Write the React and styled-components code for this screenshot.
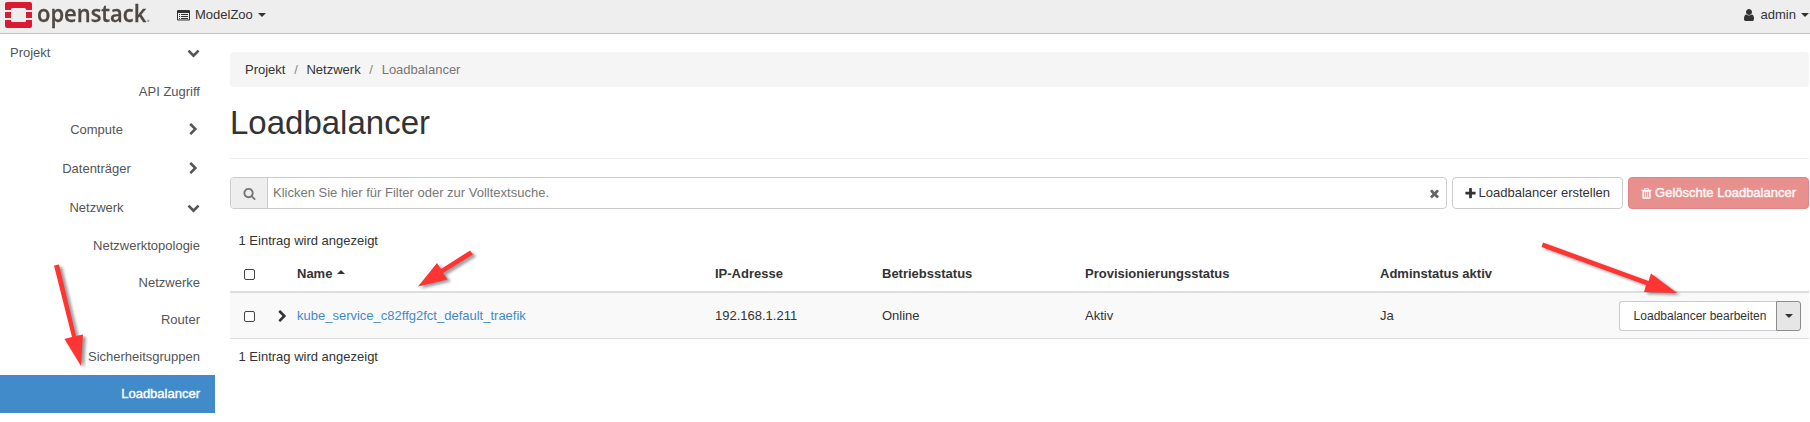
import React from "react";
import styled, { createGlobalStyle, css } from "styled-components";

const Global = createGlobalStyle`
  *, *::before, *::after { box-sizing: border-box; }
  body {
    margin: 0;
    background: #fff;
    color: #333;
    font: 13px/18.57px "Liberation Sans", Arial, sans-serif;
    overflow: hidden;
  }
  button { font: inherit; color: inherit; }
`;

const PATHS = {
  down: "M1683 808l-742 741q-19 19-45 19t-45-19l-742-741q-19-19-19-45.5t19-45.5l166-165q19-19 45-19t45 19l531 531 531-531q19-19 45-19t45 19l166 165q19 19 19 45.5t-19 45.5z",
  right: "M1363 877l-742 742q-19 19-45 19t-45-19l-166-166q-19-19-19-45t19-45l531-531-531-531q-19-19-19-45t19-45l166-166q19-19 45-19t45 19l742 742q19 19 19 45t-19 45z",
  search: "M1216 832q0-185-131.5-316.5t-316.5-131.5-316.5 131.5-131.5 316.5 131.5 316.5 316.5 131.5 316.5-131.5 131.5-316.5zm512 832q0 52-38 90t-90 38q-54 0-90-38l-343-342q-179 124-399 124-143 0-273.5-55.5t-225-150-150-225-55.5-273.5 55.5-273.5 150-225 225-150 273.5-55.5 273.5 55.5 225 150 150 225 55.5 273.5q0 220-124 399l343 343q37 37 37 90z",
  plus: "M1600 736v192q0 40-28 68t-68 28h-416v416q0 40-28 68t-68 28h-192q-40 0-68-28t-28-68v-416h-416q-40 0-68-28t-28-68v-192q0-40 28-68t68-28h416v-416q0-40 28-68t68-28h192q40 0 68 28t28 68v416h416q40 0 68 28t28 68z",
  times: "M1490 1322q0 40-28 68l-136 136q-28 28-68 28t-68-28l-294-294-294 294q-28 28-68 28t-68-28l-136-136q-28-28-28-68t28-68l294-294-294-294q-28-28-28-68t28-68l136-136q28-28 68-28t68 28l294 294 294-294q28-28 68-28t68 28l136 136q28 28 28 68t-28 68l-294 294 294 294q28 28 28 68z",
  trash: "M704 1376v-704q0-14-9-23t-23-9h-64q-14 0-23 9t-9 23v704q0 14 9 23t23 9h64q14 0 23-9t9-23zm256 0v-704q0-14-9-23t-23-9h-64q-14 0-23 9t-9 23v704q0 14 9 23t23 9h64q14 0 23-9t9-23zm256 0v-704q0-14-9-23t-23-9h-64q-14 0-23 9t-9 23v704q0 14 9 23t23 9h64q14 0 23-9t9-23zm-544-992h448l-48-117q-7-9-17-11h-317q-10 2-17 11zm928 32v64q0 14-9 23t-23 9h-96v948q0 83-47 143.5t-113 60.5h-832q-66 0-113-58.5t-47-141.5v-952h-96q-14 0-23-9t-9-23v-64q0-14 9-23t23-9h309l70-167q15-37 54-63t79-26h320q40 0 79 26t54 63l70 167h309q14 0 23 9t9 23z",
  user: "M1536 1399q0 109-62.5 187t-150.5 78h-854q-88 0-150.5-78t-62.5-187q0-85 8.5-160.5t31.5-152 58.5-131 94-89 134.5-34.5q131 128 313 128t313-128q76 0 134.5 34.5t94 89 58.5 131 31.5 152 8.5 160.5zm-256-887q0 159-112.5 271.5t-271.5 112.5-271.5-112.5-112.5-271.5 112.5-271.5 271.5-112.5 271.5 112.5 112.5 271.5z",
};

const Svg = styled.svg`
  display: block;
  flex: none;
  fill: currentColor;
`;

function Icon({ name, size = 13 }) {
  return (
    <Svg width={size} height={size} viewBox="0 0 1792 1792">
      <path d={PATHS[name]} />
    </Svg>
  );
}

const Caret = styled.span`
  flex: none;
  width: 0;
  height: 0;
  border: 4px solid transparent;
  ${(p) =>
    p.$up
      ? css`border-top: 0; border-bottom-color: currentColor; margin-bottom: 6px;`
      : css`border-bottom: 0; border-top-color: currentColor;`}
`;

const TopBar = styled.header`
  display: flex;
  align-items: center;
  height: 34px;
  padding: 0 1px 3px 5px;
  background: #eee;
  border-bottom: 1px solid #c4c4c4;
`;

const Brand = styled.div`
  display: flex;
  align-items: center;
  width: 172px;
  height: 30px;
`;

const BrandName = styled.span`
  align-self: flex-start;
  margin-left: 5px;
  color: #4f4741;
  font: 600 24px/26px "Open Sans", sans-serif;
  -webkit-text-stroke: 0.3px #4f4741;
  transform: scaleX(0.915);
  transform-origin: left;
  small { font-size: 16px; color: #999; -webkit-text-stroke: 0; }
`;

const TopMenu = styled.div`
  display: flex;
  align-items: center;
  gap: 5px;
  margin-left: ${(p) => (p.$end ? "auto" : "0")};
`;

const Body = styled.div`
  display: flex;
  height: 388px;
`;

const Sidebar = styled.nav`
  width: 215px;
  color: #555;
`;

const SideGroup = styled.div`
  display: flex;
  align-items: center;
  justify-content: ${(p) => (p.$level ? "flex-end" : "space-between")};
  height: ${(p) => (p.$level ? "39px" : "37px")};
  padding: 0 15px 0 10px;
`;

const GroupLabel = styled.span`
  padding-top: 1px;
  width: ${(p) => (p.$wide ? "auto" : "97px")};
  margin-right: ${(p) => (p.$wide ? "0" : "42px")};
  text-align: center;
`;

const SideItem = styled.div`
  height: 37px;
  padding-right: 15px;
  line-height: 37px;
  text-align: right;
  ${(p) =>
    p.$top &&
    css`
      height: 39px;
      line-height: 41px;
    `}
  ${(p) =>
    p.$active &&
    css`
      height: 38px;
      background: #428bca;
      color: #fff;
      -webkit-text-stroke: 0.4px #fff;
    `}
`;

const Main = styled.main`
  flex: 1;
  min-width: 0;
  padding: 18px 1px 0 15px;
`;

const Breadcrumb = styled.div`
  display: flex;
  height: 35px;
  padding: 0 15px;
  line-height: 35px;
  background: #f5f5f5;
  border-radius: 4px;
`;

const Crumb = styled.span`
  color: ${(p) => (p.$current ? "#777" : "#333")};
  &:not(:first-child)::before { content: "/"; padding: 0 8.7px; color: #888; }
`;

const Title = styled.h1`
  height: 72px;
  margin: 0 0 18px;
  padding-top: 18px;
  border-bottom: 1px solid #eee;
  font-size: 33px;
  font-weight: 400;
  line-height: 36px;
`;

const Toolbar = styled.div`
  display: flex;
  gap: 5px;
  height: 32px;
`;

const SearchBox = styled.div`
  display: flex;
  flex: 1;
  align-items: center;
  border: 1px solid #ccc;
  border-radius: 4px;
  color: #777;
`;

const SearchAddon = styled.div`
  display: flex;
  align-items: center;
  justify-content: center;
  width: 37px;
  height: 30px;
  margin-right: 5px;
  background: #eee;
  border-right: 1px solid #ccc;
  border-radius: 3px 0 0 3px;
`;

const Clear = styled.span`
  margin: 0 5px 0 auto;
  color: #666;
`;

const Button = styled.button`
  display: flex;
  align-items: center;
  gap: 2px;
  padding: 0 12px 0 11px;
  background: ${(p) => (p.$danger ? "#e7908e" : "#fff")};
  border: 1px solid ${(p) => (p.$danger ? "#e58583" : "#ccc")};
  border-radius: 4px;
  white-space: nowrap;
  ${(p) => p.$danger && css`color: #fdf3f3; -webkit-text-stroke: 0.5px #fdf3f3;`}
`;

const Count = styled.div`
  padding: ${(p) => (p.$bottom ? "9px" : "23px")} 8.5px 0;
`;

const columns = css`
  display: grid;
  grid-template-columns: 67px 418px 167px 203px 295px 164px 1fr;
  align-items: center;
`;

const HeadRow = styled.div`
  ${columns}
  height: 42px;
  padding-top: 8px;
  font-weight: bold;
  border-bottom: 2px solid #ddd;
`;

const Row = styled.div`
  ${columns}
  height: 46px;
  padding-top: 2px;
  background: #f9f9f9;
  border-bottom: 1px solid #ddd;
`;

const Lead = styled.div`
  display: flex;
  align-items: center;
  justify-content: space-between;
  padding: 0 8px 0 14px;
`;

const Check = styled.span`
  width: 11px;
  height: 11px;
  border: 1px solid #444;
  border-radius: 2px;
  background: #fff;
`;

const NameHead = styled.span`
  display: flex;
  align-items: center;
  gap: 5px;
`;

const Link = styled.a`
  color: #428bca;
`;

const Actions = styled.div`
  display: flex;
  justify-self: end;
  height: 30px;
  margin-right: 8px;
`;

const Action = styled.button`
  width: 157px;
  padding: 1px 0 0 4px;
  background: #fff;
  border: 1px solid #ccc;
  border-right: 0;
  border-radius: 3px 0 0 3px;
  font-size: 12px;
`;

const Toggle = styled.button`
  display: flex;
  align-items: center;
  justify-content: center;
  width: 25px;
  padding: 0;
  background: #e6e6e6;
  border: 1px solid #8c8c8c;
  border-radius: 0 3px 3px 0;
`;

const Pointers = styled.svg`
  position: absolute;
  inset: 0;
  width: 1810px;
  height: 422px;
  pointer-events: none;
  fill: #fe3533;
  filter: drop-shadow(3px 2px 1.5px rgba(0, 0, 0, 0.4));
`;

function Logo() {
  return (
    <Svg width="27" height="26" viewBox="0 0 27 26">
      <g fill="#da1a32">
        <path d="M2 0h23q2 0 2 2v6h-6V7.500q0-1.500-1.500-1.500h-12Q6 6 6 7.500V8H0V2q0-2 2-2z" />
        <path d="M0 10h6v6H0zM21 10h6v6h-6z" />
        <path d="M0 18h6v.5Q6 20 7.500 20h12q1.500 0 1.500-1.500V18h6v6q0 2-2 2H2q-2 0-2-2z" />
      </g>
    </Svg>
  );
}

function ListIcon() {
  return (
    <Svg width="13" height="11" viewBox="0 0 13 11">
      <path fillRule="evenodd" d="M1 0h11q1 0 1 1v8.500q0 1-1 1H1q-1 0-1-1V1q0-1 1-1zM1 3v6.500h11V3z" />
      <path d="M2 4h1v1H2zM4 4h7v1H4zM2 6h1v1H2zM4 6h7v1H4zM2 8h1v1H2zM4 8h7v1H4z" />
    </Svg>
  );
}

function Group({ label, open }) {
  return (
    <SideGroup $level={1}>
      <GroupLabel>{label}</GroupLabel>
      <Icon name={open ? "down" : "right"} />
    </SideGroup>
  );
}

export default function App() {
  return (
    <>
      <Global />
      <TopBar>
        <Brand>
          <Logo />
          <BrandName>openstack<small>.</small></BrandName>
        </Brand>
        <TopMenu>
          <ListIcon />
          ModelZoo
          <Caret />
        </TopMenu>
        <TopMenu $end>
          <Icon name="user" size={14} />
          admin
          <Caret />
        </TopMenu>
      </TopBar>
      <Body>
        <Sidebar>
          <SideGroup>
            <GroupLabel $wide>Projekt</GroupLabel>
            <Icon name="down" />
          </SideGroup>
          <SideItem $top>API Zugriff</SideItem>
          <Group label="Compute" />
          <Group label="Datenträger" />
          <Group label="Netzwerk" open />
          <SideItem>Netzwerktopologie</SideItem>
          <SideItem>Netzwerke</SideItem>
          <SideItem>Router</SideItem>
          <SideItem>Sicherheitsgruppen</SideItem>
          <SideItem $active>Loadbalancer</SideItem>
        </Sidebar>
        <Main>
          <Breadcrumb>
            <Crumb>Projekt</Crumb>
            <Crumb>Netzwerk</Crumb>
            <Crumb $current>Loadbalancer</Crumb>
          </Breadcrumb>
          <Title>Loadbalancer</Title>
          <Toolbar>
            <SearchBox>
              <SearchAddon><Icon name="search" /></SearchAddon>
              Klicken Sie hier für Filter oder zur Volltextsuche.
              <Clear><Icon name="times" /></Clear>
            </SearchBox>
            <Button><Icon name="plus" />Loadbalancer erstellen</Button>
            <Button $danger><Icon name="trash" />Gelöschte Loadbalancer</Button>
          </Toolbar>
          <Count>1 Eintrag wird angezeigt</Count>
          <HeadRow>
            <Lead><Check /></Lead>
            <NameHead>Name <Caret $up /></NameHead>
            <span>IP-Adresse</span>
            <span>Betriebsstatus</span>
            <span>Provisionierungsstatus</span>
            <span>Adminstatus aktiv</span>
          </HeadRow>
          <Row>
            <Lead><Check /><Icon name="right" /></Lead>
            <Link>kube_service_c82ffg2fct_default_traefik</Link>
            <span>192.168.1.211</span>
            <span>Online</span>
            <span>Aktiv</span>
            <span>Ja</span>
            <Actions>
              <Action>Loadbalancer bearbeiten</Action>
              <Toggle><Caret /></Toggle>
            </Actions>
          </Row>
          <Count $bottom>1 Eintrag wird angezeigt</Count>
        </Main>
      </Body>
      <Pointers viewBox="0 0 1810 422">
        <path d="M54 265.500L59 264.500 76 336 83 334.500 81 366 64.500 339 72 337z" />
        <path d="M470 250.500L473 254.500 443 273 447.500 279.500 418 286.500 437 263 441 269z" />
        <path d="M1543 242.500L1541.500 247 1646 285 1644 292 1677 293 1651 273.500 1648.500 281z" />
      </Pointers>
    </>
  );
}
